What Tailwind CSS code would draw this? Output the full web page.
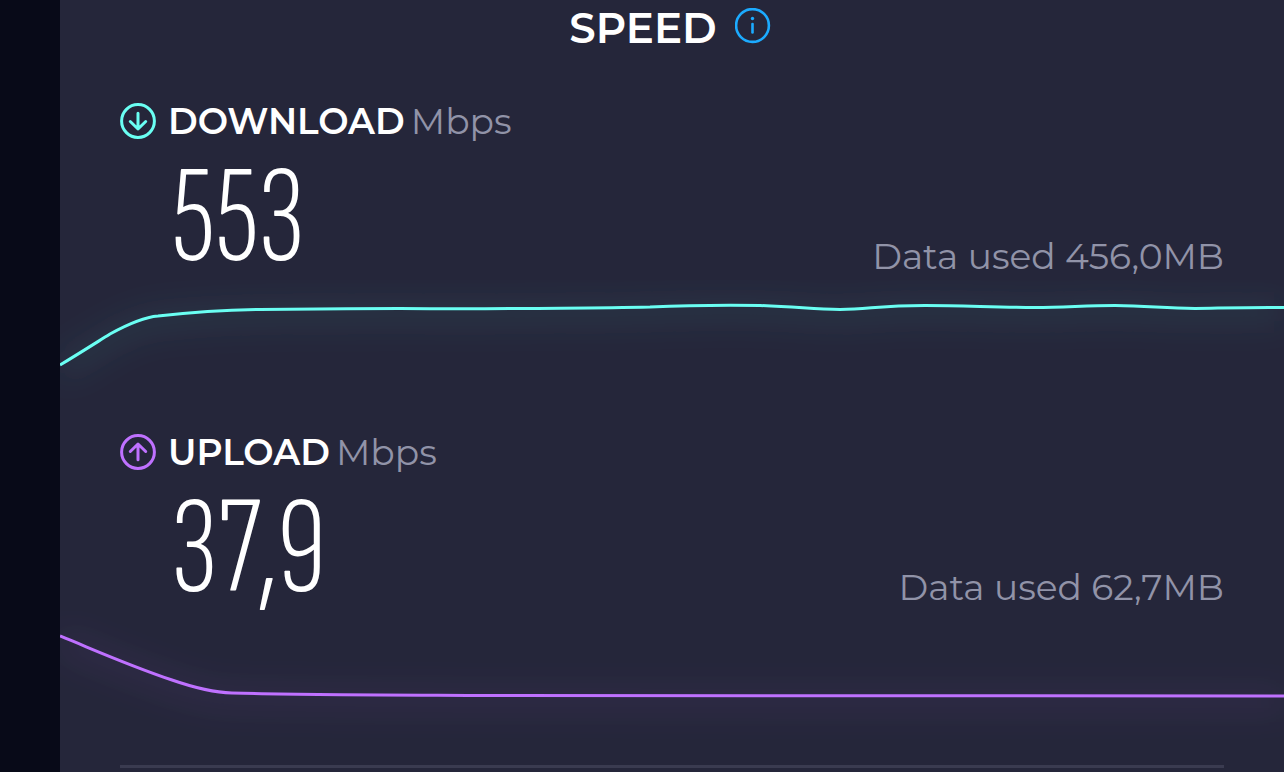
<!DOCTYPE html>
<html lang="en">
<head>
<meta charset="utf-8">
<meta name="viewport" content="width=device-width, initial-scale=1">
<title>Speed</title>
<script src="https://cdn.jsdelivr.net/npm/@tailwindcss/browser@4"></script>
</head>
<body class="min-h-screen overflow-hidden bg-[#080a18] pl-[60px] font-['Montserrat','Inter',sans-serif]">
<main class="min-h-screen bg-[#25263a]">
  <header class="flex items-start justify-center gap-[18px] pt-2 pr-1">
    <h1 class="text-[42px] leading-10 font-semibold text-white">SPEED</h1>
    <button type="button" aria-label="About speed" class="size-9">
      <svg viewBox="0 0 36 36" class="size-9" fill="none" stroke="#1cabff" stroke-width="2.6" stroke-linecap="round"><circle cx="17.500" cy="17.500" r="16.4"/><path d="M17.500 16v8.500"/><circle cx="17.500" cy="10.500" r="1.7" fill="#1cabff" stroke="none"/></svg>
    </button>
  </header>

  <section class="pt-[55px]">
    <div class="flex h-9 items-center px-[60px]">
      <svg viewBox="0 0 36 36" class="mr-3 size-9 shrink-0" fill="none" stroke="#6afff3" stroke-width="3" stroke-linecap="round" stroke-linejoin="round"><circle cx="18" cy="18" r="16.4"/><path d="M18 10.3v15.5M10.3 18.5l7.700 7.500 7.700-7.500"/></svg>
      <h2 class="text-4xl leading-9 font-semibold text-white">DOWNLOAD</h2>
      <span class="ml-1.5 text-4xl leading-9 font-normal text-[#9193a8]">Mbps</span>
    </div>
    <div class="flex h-[141px] items-end justify-between px-[60px]">
      <p class="pb-1.5 pl-[51px] font-['Sofia_Sans_Extra_Condensed','Saira_Extra_Condensed','Barlow_Condensed','Roboto_Condensed',sans-serif] text-[140px] leading-[112px] font-light text-white">553</p>
      <p class="pb-1.5 text-4xl leading-9 font-normal text-[#9193a8]">Data used 456,0MB</p>
    </div>
    <svg viewBox="0 0 1224 140" preserveAspectRatio="none" class="block h-[140px] w-full" fill="none" role="img" aria-label="Download speed over time">
      <defs>
        <filter id="glow" filterUnits="userSpaceOnUse" x="-60" y="-60" width="1344" height="260"><feGaussianBlur stdDeviation="15"/></filter>
        <path id="down" d="M0 85C20 73 34 64 50 54C70 43 86 37 98 36C125 33 165 30 200 29.500C260 29.500 290 28.500 340 28.500C390 29 410 29 460 28.500C510 28 545 28 590 27C635 25 665 25 700 25.500C740 27 755 29.500 780 29.500C810 29 820 25.500 865 25.500C905 25.500 935 27.500 975 27.500C1005 27.500 1025 25.500 1055 25.500C1090 26 1105 28.500 1135 28.500C1165 28 1195 27 1224 27.500"/>
      </defs>
      <use href="#down" y="5" stroke="#6afff3" stroke-opacity=".07" stroke-width="22" filter="url(#glow)"/>
      <use href="#down" stroke="#6afff3" stroke-width="3"/>
    </svg>
  </section>

  <section class="pt-[14px]">
    <div class="flex h-9 items-center px-[60px]">
      <svg viewBox="0 0 36 36" class="mr-3 size-9 shrink-0" fill="none" stroke="#bf71ff" stroke-width="3" stroke-linecap="round" stroke-linejoin="round"><circle cx="18" cy="18" r="16.4"/><path d="M18 25.700V10.200M10.300 17.500l7.700-7.500 7.700 7.500"/></svg>
      <h2 class="text-4xl leading-9 font-semibold text-white">UPLOAD</h2>
      <span class="ml-1.5 text-4xl leading-9 font-normal text-[#9193a8]">Mbps</span>
    </div>
    <div class="flex h-[141px] items-end justify-between px-[60px]">
      <p class="pb-1.5 pl-[51px] font-['Sofia_Sans_Extra_Condensed','Saira_Extra_Condensed','Barlow_Condensed','Roboto_Condensed',sans-serif] text-[140px] leading-[112px] font-light text-white">37,9</p>
      <p class="pb-1.5 text-4xl leading-9 font-normal text-[#9193a8]">Data used 62,7MB</p>
    </div>
    <svg viewBox="0 0 1224 140" preserveAspectRatio="none" class="block h-[140px] w-full" fill="none" role="img" aria-label="Upload speed over time">
      <defs><path id="up" d="M0 25C30 37 65 53 112 69C135 77 155 81.500 172 82C240 84 330 84 430 84.500C600 85 900 85 1224 85"/></defs>
      <use href="#up" y="5" stroke="#bf71ff" stroke-opacity=".07" stroke-width="22" filter="url(#glow)"/>
      <use href="#up" stroke="#bf71ff" stroke-width="3"/>
    </svg>
  </section>
  <hr class="mx-[60px] mt-[14px] border-t-3 border-[#3a3b50]">
</main>
</body>
</html>
